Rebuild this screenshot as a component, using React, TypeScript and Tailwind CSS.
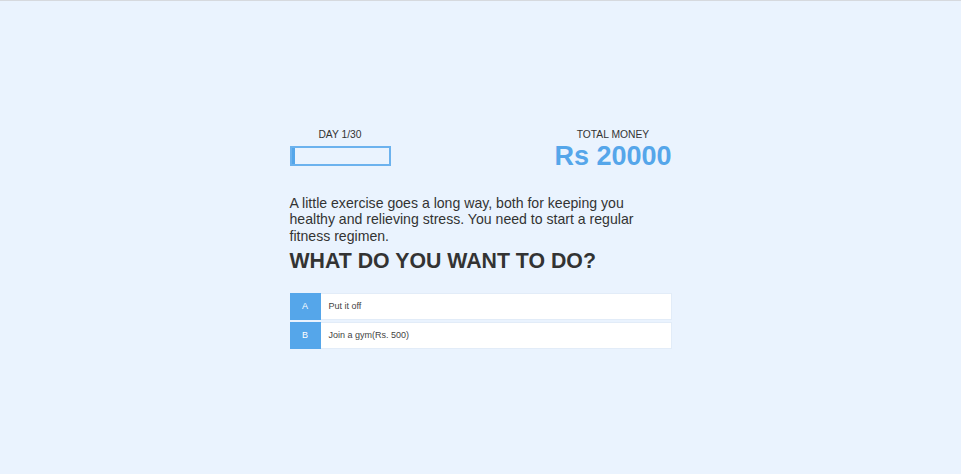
export default function App() {
  const options = [
    { key: "A", text: "Put it off" },
    { key: "B", text: "Join a gym(Rs. 500)" },
  ];

  return (
    <div
      className="w-screen h-screen pt-[2px] bg-[#eaf3fe] border-t border-[#d6d9de] flex justify-center items-center text-[#333]"
      style={{ fontFamily: "'Liberation Sans', Arial, sans-serif" }}
    >
      <div className="w-[382px] flex flex-col">
        <div className="flex justify-between items-start">
          <div className="flex flex-col items-center w-[101px]">
            <span className="text-[10.3px] leading-[13px]">DAY 1/30</span>
            <div className="mt-[5px] w-full h-[20px] border-2 border-[#6cb2ee] flex">
              <div className="w-[3px] h-full bg-[#55a6ea]"></div>
            </div>
          </div>
          <div className="flex flex-col items-center">
            <span className="text-[10.3px] leading-[13px]">TOTAL MONEY</span>
            <span className="mt-[1px] text-[27px] leading-[28px] font-bold text-[#55a6ea]">
              Rs 20000
            </span>
          </div>
        </div>

        <p className="mt-[25px] text-[14.1px] leading-[16.5px]">
          A little exercise goes a long way, both for keeping you healthy and
          relieving stress. You need to start a regular fitness regimen.
        </p>
        <h1 className="mt-[4px] text-[21.3px] leading-[26px] font-bold">
          WHAT DO YOU WANT TO DO?
        </h1>

        <div className="mt-[19px] flex flex-col gap-[2px]">
          {options.map((o) => (
            <div key={o.key} className="flex h-[27px] cursor-pointer">
              <div className="w-[31px] bg-[#55a6ea] text-white text-[9px] flex items-center justify-center">
                {o.key}
              </div>
              <div className="flex-1 flex items-center pl-[8px] bg-white border border-l-0 border-[#e2ecf8] text-[9px] text-[#444]">
                {o.text}
              </div>
            </div>
          ))}
        </div>
      </div>
    </div>
  );
}
